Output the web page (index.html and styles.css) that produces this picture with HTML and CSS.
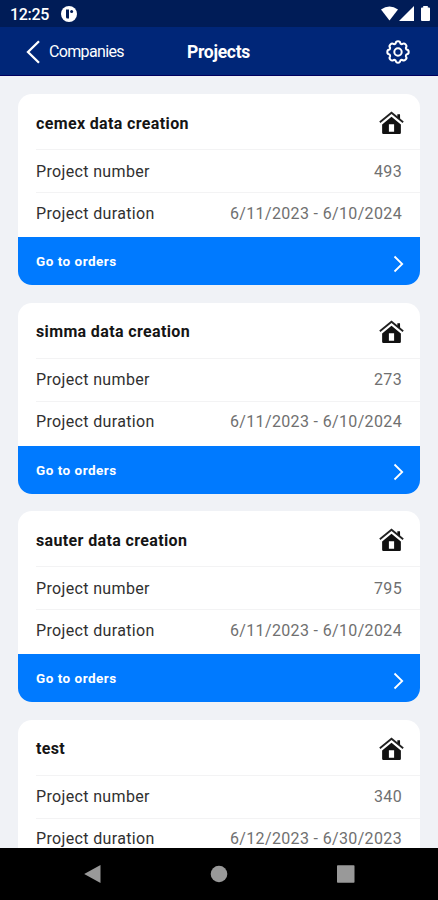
FILE: index.html
```
<!DOCTYPE html>
<html lang="en">
<head>
<meta charset="utf-8">
<title>Projects</title>
<link rel="stylesheet" href="styles.css">
</head>
<body>
<svg class="defs" width="0" height="0">
  <symbol id="house" viewBox="0 0 24 23">
    <path fill-rule="evenodd" d="M3 13 12 5.400 21 13V20.800Q21 22 19.800 22H4.200Q3 22 3 20.800ZM9.500 12.800V20H14.500V12.800Z"/>
    <path d="M.8 10.800 12 1.600 23.200 10.800" fill="none" stroke="#222" stroke-width="1.800"/>
    <path d="M17.600 3H20.200V8L17.600 5.800Z"/>
  </symbol>
  <symbol id="next" viewBox="0 0 10 18">
    <path d="M1 1.500 8.700 9 1 16.500" fill="none" stroke="#fff" stroke-width="1.800"/>
  </symbol>
</svg>
<div class="screen">
  <header class="status">
    <span class="time">12:25</span>
    <svg class="app-dot" viewBox="0 0 16 16"><circle cx="8" cy="8" r="8" fill="#fff"/><path d="M5 3.500H8V12.500H6.500Q5 12.500 5 11Z" fill="#001c57"/><circle cx="10.600" cy="5.500" r="1.500" fill="#001c57"/></svg>
    <svg class="signals" viewBox="0 0 50 16">
      <path d="M0 3.500Q8.500-2.500 17 3.500L8.500 14.500Z"/>
      <path d="M18 15 33 0V15Z"/>
      <path d="M42.200 0H46.800V1.500H48Q49 1.500 49 2.500V14Q49 15 48 15H41Q40 15 40 14V2.500Q40 1.500 41 1.500H42.200Z"/>
    </svg>
  </header>
  <nav class="bar">
    <a class="back"><svg viewBox="0 0 14 24"><path d="M13 1.200 2 12 13 22.800"/></svg><span>Companies</span></a>
    <h1>Projects</h1>
    <svg class="gear" viewBox="0 0 24 24">
      <path d="M9.600 3.500Q9.800 1.300 12 1.300T14.400 3.500Q15.200 4.300 16.300 4.100Q18 2.700 19.600 4.400T19.900 7.700Q19.700 8.800 20.500 9.600Q22.700 9.800 22.700 12T20.500 14.400Q19.700 15.200 19.900 16.300Q21.300 18 19.600 19.600T16.300 19.900Q15.200 19.700 14.400 20.500Q14.200 22.700 12 22.700T9.600 20.500Q8.800 19.700 7.700 19.900Q6 21.300 4.400 19.600T4.100 16.300Q4.300 15.200 3.500 14.400Q1.300 14.200 1.300 12T3.500 9.600Q4.300 8.800 4.100 7.700Q2.700 6 4.400 4.400T7.700 4.100Q8.800 4.300 9.600 3.500Z"/>
      <circle cx="12" cy="12" r="3.700"/>
    </svg>
  </nav>
  <main class="list">
    <section class="card">
      <div class="head"><h2>cemex data creation</h2><svg class="house"><use href="#house"/></svg></div>
      <div class="row number"><span>Project number</span><span class="value">493</span></div>
      <div class="row duration"><span>Project duration</span><span class="value date">6/11/2023 - 6/10/2024</span></div>
      <a class="go"><span>Go to orders</span><svg class="next"><use href="#next"/></svg></a>
    </section>
    <section class="card">
      <div class="head"><h2>simma data creation</h2><svg class="house"><use href="#house"/></svg></div>
      <div class="row number"><span>Project number</span><span class="value">273</span></div>
      <div class="row duration"><span>Project duration</span><span class="value date">6/11/2023 - 6/10/2024</span></div>
      <a class="go"><span>Go to orders</span><svg class="next"><use href="#next"/></svg></a>
    </section>
    <section class="card">
      <div class="head"><h2>sauter data creation</h2><svg class="house"><use href="#house"/></svg></div>
      <div class="row number"><span>Project number</span><span class="value">795</span></div>
      <div class="row duration"><span>Project duration</span><span class="value date">6/11/2023 - 6/10/2024</span></div>
      <a class="go"><span>Go to orders</span><svg class="next"><use href="#next"/></svg></a>
    </section>
    <section class="card">
      <div class="head"><h2>test</h2><svg class="house"><use href="#house"/></svg></div>
      <div class="row number"><span>Project number</span><span class="value">340</span></div>
      <div class="row duration"><span>Project duration</span><span class="value date">6/12/2023 - 6/30/2023</span></div>
    </section>
  </main>
  <footer class="system">
    <svg viewBox="0 0 20 20"><path d="M1.200 10 17.500 1V19Z"/></svg>
    <svg viewBox="0 0 20 20"><circle cx="10" cy="10" r="8.300"/></svg>
    <svg viewBox="0 0 20 20"><rect x="1" y="1.200" width="17.500" height="17.500" rx=".8"/></svg>
  </footer>
</div>
</body>
</html>
```
FILE: styles.css
```
* { box-sizing: border-box; }
body { margin: 0; font-family: Roboto, sans-serif; font-size: 16px; }
h1, h2 { margin: 0; }
.defs { display: none; }
.screen { display: flex; flex-direction: column; width: 438px; height: 900px; overflow: hidden; background: #f0f2f6; }
.status { flex: none; display: flex; align-items: center; height: 27px; padding: 1px 7px 0 10px; background: #001c57; color: #fff; }
.time { width: 39px; font-size: 16px; font-weight: 500; letter-spacing: -0.3px; }
.app-dot { width: 16px; height: 16px; margin-left: 12px; }
.signals { width: 50px; height: 16px; margin-left: auto; fill: #fff; }
.bar { flex: none; display: grid; grid-template-columns: 1fr auto 1fr; align-items: center; height: 49px; padding: 1px 28px 0 26px; background: #002678; border-bottom: 1px solid #00005e; color: #fff; }
.back { display: flex; align-items: center; gap: 9px; font-size: 16px; letter-spacing: -0.65px; }
.back svg { width: 14px; height: 24px; fill: none; stroke: #fff; stroke-width: 2.3; }
.bar h1 { padding-left: 1px; font-size: 17.5px; font-weight: 700; letter-spacing: -0.3px; }
.gear { justify-self: end; width: 24px; height: 24px; fill: none; stroke: #fff; stroke-width: 2; }
.list { flex: 1; min-height: 0; overflow: hidden; display: flex; flex-direction: column; gap: 17.5px; padding: 18px 18px 0; }
.card { flex: none; height: 191px; border-radius: 14px; overflow: hidden; background: #fff; color: #303030; }
.head { display: flex; align-items: center; justify-content: space-between; height: 55px; padding: 3px 16px 0 18px; }
.head h2 { font-size: 16px; font-weight: 700; letter-spacing: 0.36px; color: #151515; }
.house { width: 25px; height: 24px; fill: #111; }
.row { display: flex; align-items: center; justify-content: space-between; margin-left: 18px; padding-right: 18px; border-top: 1px solid #f3f3f4; letter-spacing: 0.35px; }
.number { height: 43px; }
.duration { height: 45px; padding-bottom: 3.4px; }
.value { color: #707070; }
.go { display: flex; align-items: center; justify-content: space-between; height: 48px; padding: 0 16px 0 18px; background: #007aff; color: #fff; font-size: 13.5px; font-weight: 700; letter-spacing: 0.5px; }
.next { width: 11px; height: 18px; margin-top: 5px; }
.system { flex: none; display: flex; align-items: center; justify-content: center; gap: 106.5px; height: 52px; background: #000; }
.system svg { width: 20px; height: 20px; fill: #999; }
```
